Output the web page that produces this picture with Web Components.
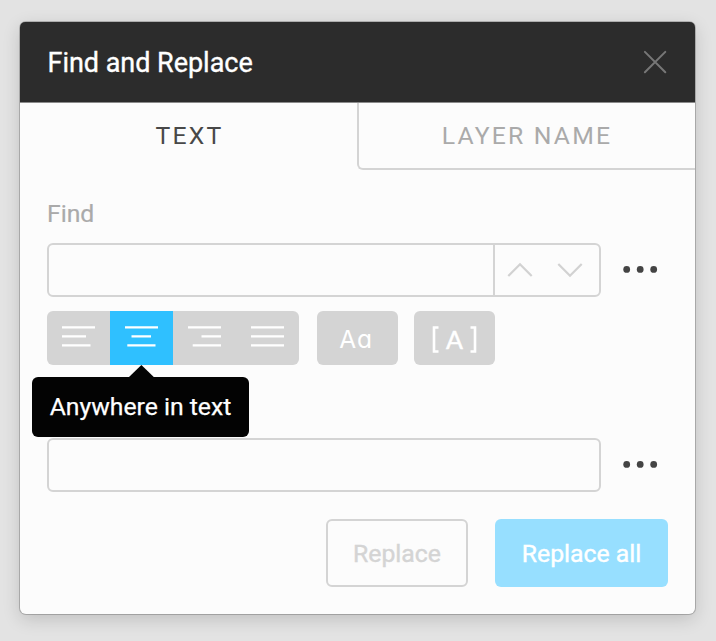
<!DOCTYPE html>
<html lang="en">
<head>
<meta charset="utf-8">
<title>Find and Replace</title>
<style>
html,body{margin:0;height:100%}
body{background:#e3e3e3;font-family:Roboto,"Liberation Sans",sans-serif;overflow:hidden;box-sizing:border-box;padding:22px 21px 27px 20px}
</style>
</head>
<body>
<find-dialog></find-dialog>
<script>
const define = (name, css, html) => customElements.define(name, class extends HTMLElement {
  constructor() {
    super();
    this.attachShadow({mode: 'open'}).innerHTML = `<style>*{box-sizing:border-box}:host{display:block;box-sizing:border-box}svg{display:block}${css}</style>${typeof html === 'function' ? html(this) : html}`;
  }
});

define('dialog-header', `
:host{height:81px;padding:0 26px 0 27.5px;display:flex;align-items:center;justify-content:space-between;background:#2c2c2c;color:#fff;border-bottom:1px solid #8b8b8b;border-radius:5px 5px 0 0;font-size:27px;line-height:32px}
span{padding-top:1px;letter-spacing:-.03px;-webkit-text-stroke:.35px #fff}`,
`<span><slot></slot></span>
<svg width="28" height="28" viewBox="0 0 28 28" fill="none" stroke="#777" stroke-width="2" stroke-linecap="round"><path d="M3.9 3.9 24.3 24.3M24.3 3.9 3.9 24.3"/></svg>`);

define('dialog-tab', `
:host{width:337px;height:67px;padding-left:2px;text-align:center;font-size:24.75px;line-height:66px;letter-spacing:2.2px;color:#484848}
:host([idle]){width:338px;padding-left:0;color:#aaa;border:solid #d4d4d4;border-width:0 0 2px 2px;border-radius:0 0 0 6px}`, `<slot></slot>`);

define('tab-bar', `:host{display:flex}`, `<slot></slot>`);

define('text-field', `
:host{width:554px;height:54px;border:2px solid #d4d4d4;border-radius:6px;display:flex;justify-content:flex-end}`, `<slot></slot>`);

define('match-stepper', `
:host{width:106px;border-left:2px solid #d4d4d4;display:flex;align-items:center;padding:0 0 1px 11px;gap:22px}`,
`<svg width="28" height="18" viewBox="0 0 28 18" fill="none" stroke="#d2d2d2" stroke-width="2.2"><path d="M2.3 15 14 3.3 25.7 15"/></svg>
<svg width="28" height="18" viewBox="0 0 28 18" fill="none" stroke="#d2d2d2" stroke-width="2.2"><path d="M2.3 3 14 14.7 25.7 3"/></svg>`);

define('more-button', `:host{width:36px;padding-bottom:2px}`,
`<svg width="36" height="8" viewBox="0 0 36 8" fill="#444"><circle cx="4.7" cy="4.4" r="3.4"/><circle cx="18.2" cy="4.4" r="3.4"/><circle cx="31.7" cy="4.4" r="3.4"/></svg>`);

define('field-row', `:host{display:flex;align-items:center;gap:21px}`, `<slot></slot>`);

const bars = {
  left: 'M0 2H33M0 11H24M0 20H28.5',
  center: 'M0 2H33M6.5 11H26M2.3 20H30.5',
  right: 'M0 2H33M13.5 11H33M4.7 20H33',
  justify: 'M0 2H33M0 11H33M0 20H33'
};
define('align-option', `
:host{width:63px;height:54px;display:flex;padding:14px 0 0 15px;position:relative}
:host([active]){background:#2fc0ff}
svg{flex:none}`,
el => `<svg width="33" height="23" viewBox="0 0 33 23" stroke="#fff" stroke-width="2.4" fill="none"><path transform="translate(0 .4)" d="${bars[el.getAttribute('kind')]}"/></svg><slot></slot>`);

define('align-group', `:host{display:flex;background:#d4d4d4;border-radius:6px}`, `<slot></slot>`);

define('tool-tip', `
:host{position:absolute;z-index:2;left:-78px;top:66px;width:217px;height:60px;border-radius:6px;background:#030303;color:#fff;font-size:24.75px;line-height:60px;text-align:center;white-space:nowrap}
svg{position:absolute;left:96px;top:-12px}
span{-webkit-text-stroke:.25px #fff}`,
`<svg width="27" height="13" viewBox="0 0 27 13"><path d="M0 13 13.4 0 26.8 13Z" fill="#030303"/></svg><span><slot></slot></span>`);

define('match-toggle', `
:host{width:81px;height:54px;border-radius:6px;background:#d4d4d4;color:#fff;display:flex;align-items:center;justify-content:center}
.case{font:400 24.5px/54px Inter,"Noto Sans",sans-serif;font-feature-settings:"cv11";letter-spacing:.8px;padding:2px 3px 0 0}
.word{font:400 25px/54px Lato,sans-serif;display:flex;align-items:center;gap:7px;padding-top:1px;-webkit-text-stroke:.5px #fff}
.word svg{margin-top:1px}`,
el => el.getAttribute('kind') === 'case' ? `<span class="case"><slot></slot></span>` :
`<span class="word"><svg width="7" height="27" viewBox="0 0 7 27" fill="none" stroke="#fff" stroke-width="2.6"><path d="M6.5 1.5H2V25.5H6.5"/></svg><slot></slot><svg width="7" height="27" viewBox="0 0 7 27" fill="none" stroke="#fff" stroke-width="2.6"><path d="M.5 1.5H5V25.5H.5"/></svg></span>`);

define('tool-row', `:host{display:flex;margin-top:14px}.g{display:flex;gap:16px;margin-left:18px}`,
`<slot name="align"></slot><div class="g"><slot></slot></div>`);

define('action-button', `
:host{height:68px;width:142px;border:2px solid #d4d4d4;border-radius:6px;color:#d4d4d4;font-size:24.75px;line-height:65px;text-align:center;-webkit-text-stroke:.4px}
:host([primary]){width:173px;border:0;background:#97dfff;color:#fff;line-height:69px}`, `<slot></slot>`);

define('find-dialog', `
:host{height:592px;border-radius:6px;background:#fcfcfc;box-shadow:0 0 0 1px rgba(0,0,0,.2),0 5px 18px rgba(0,0,0,.16)}
.body{padding:28px 27px 0}
label{display:block;font-size:24.75px;line-height:30px;height:45px;padding-top:1px;color:#aaa;-webkit-text-stroke:.2px}
.second{margin-top:73px}
.actions{display:flex;justify-content:flex-end;gap:27px;margin-top:27px}`,
`<dialog-header>Find and Replace</dialog-header>
<tab-bar><dialog-tab>TEXT</dialog-tab><dialog-tab idle>LAYER NAME</dialog-tab></tab-bar>
<div class="body">
<label>Find</label>
<field-row><text-field><match-stepper></match-stepper></text-field><more-button></more-button></field-row>
<tool-row>
<align-group slot="align"><align-option kind="left"></align-option><align-option kind="center" active><tool-tip>Anywhere in text</tool-tip></align-option><align-option kind="right"></align-option><align-option kind="justify"></align-option></align-group>
<match-toggle kind="case">Aa</match-toggle><match-toggle kind="word">A</match-toggle>
</tool-row>
<field-row class="second"><text-field></text-field><more-button></more-button></field-row>
<div class="actions"><action-button>Replace</action-button><action-button primary>Replace all</action-button></div>
</div>`);
</script>
</body>
</html>
